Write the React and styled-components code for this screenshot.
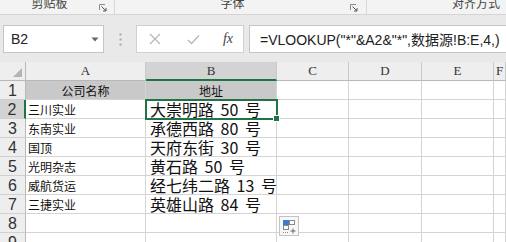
import React from 'react'
import styled, { createGlobalStyle } from 'styled-components'

const GlobalStyle = createGlobalStyle`
  html, body {
    margin: 0;
    padding: 0;
    background: #ffffff;
  }
  body {
    width: 506px;
    height: 242px;
    overflow: hidden;
    font-family: "Liberation Sans", "Noto Sans CJK SC", sans-serif;
  }
`

const Wrapper = styled.div`
  width: 506px;
  height: 242px;
  overflow: hidden;
  display: flex;
  flex-direction: column;
`

const Ribbon = styled.div`
  height: 14px;
  flex: none;
  display: flex;
  background: #f3f3f3;
  border-bottom: 1px solid #d5d5d5;
  overflow: hidden;
`

const RibbonGroup = styled.div`
  width: ${p => p.w}px;
  flex: none;
  display: flex;
  align-items: flex-start;
  border-right: ${p => (p.last ? 'none' : '1px solid #d8d8d8')};
`

const GroupLabel = styled.div`
  font-family: "Noto Sans CJK SC", sans-serif;
  font-size: 12px;
  line-height: 14px;
  margin-top: -4px;
  color: #444;
  padding-left: ${p => p.pad}px;
  width: ${p => p.w}px;
  text-align: ${p => (p.left ? 'left' : 'center')};
  flex: none;
`

const Launcher = styled.svg`
  margin-top: 4px;
  flex: none;
`

const FormulaStrip = styled.div`
  height: 47px;
  flex: none;
  display: flex;
  align-items: flex-start;
  padding-top: 10px;
  box-sizing: border-box;
  background: #e9e9e9;
`

const NameBox = styled.div`
  width: 101px;
  height: 28px;
  margin-left: 3px;
  box-sizing: border-box;
  background: #fff;
  border: 1px solid #c6c6c6;
  display: flex;
  align-items: center;
  justify-content: space-between;
  padding: 0 4px 0 7px;
  font-size: 14px;
  color: #222;
  flex: none;
`

const Grip = styled.div`
  width: 32px;
  height: 28px;
  flex: none;
  display: flex;
  align-items: center;
  justify-content: center;
`

const ButtonBox = styled.div`
  width: 108px;
  height: 28px;
  box-sizing: border-box;
  background: #fff;
  border: 1px solid #d0d0d0;
  display: flex;
  align-items: center;
  flex: none;
`

const FxButton = styled.div`
  width: ${p => p.w}px;
  display: flex;
  justify-content: center;
  align-items: center;
  flex: none;
`

const FxText = styled.span`
  font-family: "Liberation Serif", serif;
  font-style: italic;
  font-size: 14px;
  color: #444;
`

const FormulaInput = styled.div`
  margin-left: 5px;
  flex: 1;
  height: 28px;
  box-sizing: border-box;
  background: #fff;
  border: 1px solid #c6c6c6;
  border-right: none;
  display: flex;
  align-items: center;
  padding-left: 10px;
  font-family: "Liberation Sans", "Noto Sans CJK SC", sans-serif;
  font-size: 14px;
  color: #222;
  white-space: nowrap;
`

const Sheet = styled.div`
  position: relative;
  flex: 1;
  display: grid;
  grid-template-columns: 26px 120px 131px 72px 73px 72px 1fr;
  grid-auto-rows: 19px;
  overflow: hidden;
`

const HeaderCell = styled.div`
  box-sizing: border-box;
  background: ${p => (p.sel ? '#d3d3d3' : '#eeeeee')};
  border-right: 1px solid #c9c9c9;
  border-bottom: ${p => (p.sel ? '2px solid #217346' : '1px solid #b8b8b8')};
  display: flex;
  align-items: center;
  justify-content: center;
  font-family: "Liberation Serif", serif;
  font-size: 13px;
  color: #333;
`

const RowHead = styled.div`
  box-sizing: border-box;
  background: ${p => (p.sel ? '#d3d3d3' : '#eeeeee')};
  border-right: ${p => (p.sel ? '2px solid #217346' : '1px solid #b8b8b8')};
  border-bottom: 1px solid #d0d0d0;
  display: flex;
  align-items: center;
  justify-content: center;
  font-family: "Liberation Sans", sans-serif;
  font-size: 16px;
  color: #333;
  padding-top: 2px;
`

const Corner = styled.div`
  box-sizing: border-box;
  background: #eeeeee;
  border-right: 1px solid #b8b8b8;
  border-bottom: 1px solid #b8b8b8;
  display: flex;
  align-items: flex-end;
  justify-content: flex-end;
  padding: 0 3px 3px 0;
`

const Cell = styled.div`
  box-sizing: border-box;
  position: relative;
  background: ${p => (p.fill ? '#c9c9c9' : '#fff')};
  border-right: 1px solid #d4d4d4;
  border-bottom: 1px solid #d4d4d4;
  display: flex;
  align-items: flex-end;
  justify-content: ${p => (p.center ? 'center' : 'flex-start')};
  padding-left: ${p => (p.center ? 0 : p.big ? 4 : 2)}px;
  font-family: "Noto Sans CJK SC", sans-serif;
  font-size: ${p => (p.big ? 16 : 12)}px;
  line-height: ${p => (p.big ? 17 : 16)}px;
  word-spacing: ${p => (p.big ? 3 : 0)}px;
  color: #111;
  white-space: pre;
  outline: ${p => (p.active ? '2px solid #217346' : 'none')};
  outline-offset: -1px;
  z-index: ${p => (p.active ? 2 : 'auto')};

  &::after {
    content: ${p => (p.active ? "''" : 'none')};
    position: absolute;
    right: -4px;
    bottom: -4px;
    width: 5px;
    height: 5px;
    background: #217346;
    border: 1px solid #fff;
  }
`

const QuickAnalysis = styled.div`
  position: absolute;
  left: 279px;
  top: 154px;
  width: 20px;
  height: 20px;
  box-sizing: border-box;
  border: 1px solid #c3c3c3;
  background: #f7f7f7;
  display: flex;
  align-items: center;
  justify-content: center;
`

const rows = [
  ['公司名称', '地址'],
  ['三川实业', '大崇明路 50 号'],
  ['东南实业', '承德西路 80 号'],
  ['国顶', '天府东街 30 号'],
  ['光明杂志', '黄石路 50 号'],
  ['威航货运', '经七纬二路 13 号'],
  ['三捷实业', '英雄山路 84 号'],
  ['', ''],
  ['', ''],
  ['', ''],
]

const cols = ['A', 'B', 'C', 'D', 'E', 'F']

const LauncherIcon = () => (
  <Launcher width="8" height="8" viewBox="0 0 8 8">
    <path d="M0.5 0.5H6M0.5 0.5V6" stroke="#8a8a8a" strokeWidth="1" fill="none" />
    <path d="M2.5 2.5L7 7M7 4V7H4" stroke="#555" strokeWidth="1" fill="none" />
  </Launcher>
)

export default function App() {
  return (
    <Wrapper>
      <GlobalStyle />
      <Ribbon>
        <RibbonGroup w={114}>
          <GroupLabel w={99} pad={0}>剪贴板</GroupLabel>
          <LauncherIcon />
        </RibbonGroup>
        <RibbonGroup w={251}>
          <GroupLabel w={235} pad={0}>字体</GroupLabel>
          <LauncherIcon />
        </RibbonGroup>
        <RibbonGroup w={141} last>
          <GroupLabel w={141} pad={85} left>对齐方式</GroupLabel>
        </RibbonGroup>
      </Ribbon>

      <FormulaStrip>
        <NameBox>
          <span>B2</span>
          <svg width="8" height="5" viewBox="0 0 8 5">
            <path d="M0.5 0.5H7.5L4 4.5Z" fill="#666" />
          </svg>
        </NameBox>
        <Grip>
          <svg width="3" height="13" viewBox="0 0 3 13">
            <rect x="0.5" y="0.5" width="2" height="2" fill="#a8a8a8" />
            <rect x="0.5" y="5.5" width="2" height="2" fill="#a8a8a8" />
            <rect x="0.5" y="10.5" width="2" height="2" fill="#a8a8a8" />
          </svg>
        </Grip>
        <ButtonBox>
          <FxButton w={36}>
            <svg width="12" height="12" viewBox="0 0 12 12">
              <path d="M1 1L11 11M11 1L1 11" stroke="#b8b8b8" strokeWidth="1.3" />
            </svg>
          </FxButton>
          <FxButton w={40}>
            <svg width="13" height="11" viewBox="0 0 13 11">
              <path d="M1 6L4.5 9.5L12 1.5" stroke="#b8b8b8" strokeWidth="1.4" fill="none" />
            </svg>
          </FxButton>
          <FxButton w={30}>
            <FxText>fx</FxText>
          </FxButton>
        </ButtonBox>
        <FormulaInput>=VLOOKUP("*"&amp;A2&amp;"*",数据源!B:E,4,)</FormulaInput>
      </FormulaStrip>

      <Sheet>
        <Corner>
          <svg width="9" height="9" viewBox="0 0 9 9">
            <path d="M9 0V9H0Z" fill="#b4b4b4" />
          </svg>
        </Corner>
        {cols.map(c => (
          <HeaderCell key={c} sel={c === 'B'}>{c}</HeaderCell>
        ))}
        {rows.map((r, i) => (
          <React.Fragment key={i}>
            <RowHead sel={i === 1}>{i + 1}</RowHead>
            <Cell fill={i === 0} center={i === 0}>{r[0]}</Cell>
            <Cell fill={i === 0} center={i === 0} big={i > 0} active={i === 1}>{r[1]}</Cell>
            <Cell />
            <Cell />
            <Cell />
            <Cell />
          </React.Fragment>
        ))}
        <QuickAnalysis>
          <svg width="16" height="16" viewBox="0 0 16 16">
            <rect x="2" y="2" width="6" height="5" fill="#3f7bd0" />
            <rect x="8.5" y="2.5" width="5" height="4" fill="#fff" stroke="#8a8a8a" strokeWidth="1" />
            <rect x="2.5" y="7.5" width="5" height="4" fill="#fff" stroke="#8a8a8a" strokeWidth="1" />
            <path d="M2 14.5H8" stroke="#8a8a8a" strokeWidth="1" strokeDasharray="1 1" />
            <path d="M12 10.5V15.5M9.5 13H14.5" stroke="#666" strokeWidth="1" />
          </svg>
        </QuickAnalysis>
      </Sheet>
    </Wrapper>
  )
}
